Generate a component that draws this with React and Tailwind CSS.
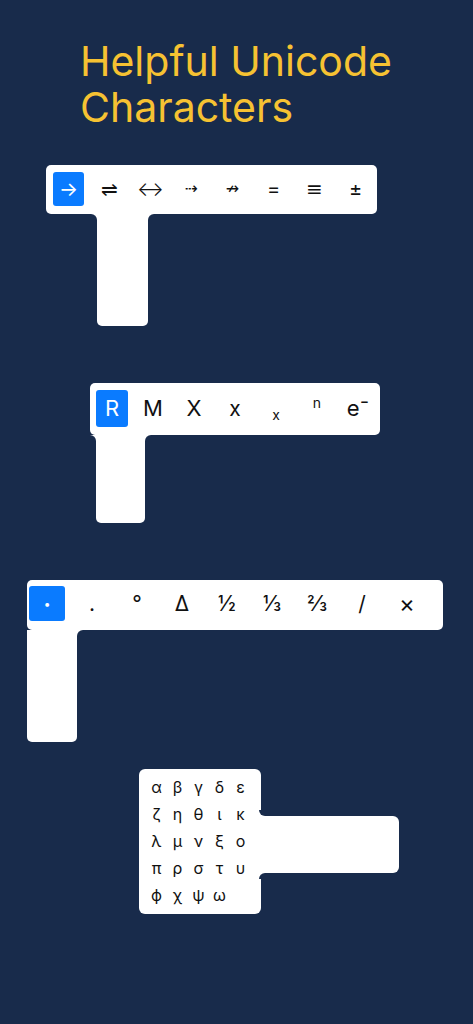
import React from 'react';

const FONT = { fontFamily: 'Inter, "DejaVu Sans", "Noto Sans", sans-serif' };

const ARROWS = ['→', '⇌', '↔', '⇢', '↛', '=', '≡', '±'];
const MARKS = ['•', '.', '°', 'Δ', '½', '⅓', '⅔', '/', '×'];
const GREEK = [
    'α', 'β', 'γ', 'δ', 'ε',
    'ζ', 'η', 'θ', 'ι', 'κ',
    'λ', 'μ', 'ν', 'ξ', 'ο',
    'π', 'ρ', 'σ', 'τ', 'υ',
    'ϕ', 'χ', 'ψ', 'ω',
];

// little inverted corners where the stem meets the bar
const Joint = ({ side }) => (
    <div className={`absolute top-0 w-[6px] h-[6px] bg-white ${side === 'left' ? '-left-[6px]' : '-right-[6px]'}`}>
        <div className={`w-full h-full bg-[#182b4b] ${side === 'left' ? 'rounded-tr-[6px]' : 'rounded-tl-[6px]'}`} />
    </div>
);

const Stem = ({ className }) => (
    <div className={`relative bg-white rounded-b-[5px] ${className}`}>
        <Joint side="left" />
        <Joint side="right" />
    </div>
);

const App = () => {
    return (
        <div className="min-h-screen w-full bg-[#182b4b] pb-10" style={FONT}>
            <h1 className="pl-[80px] pt-[38px] text-[41px] leading-[46px] text-[#f6c232] font-normal">
                Helpful Unicode<br />Characters
            </h1>

            {/* arrows */}
            <div className="mt-[35px] ml-[46px] flex flex-col items-start">
                <div className="w-[331px] h-[49px] bg-white rounded-[5px] flex items-start pt-[7px] pl-[7px] gap-[10px] text-[20px] text-[#111]">
                    {ARROWS.map((c, i) => (
                        <div
                            key={i}
                            className={`w-[31px] h-[34px] flex items-center justify-center rounded-[3px] ${i === 0 ? 'bg-[#0a7bff] text-white' : ''} ${i === 1 || i === 2 ? 'font-light' : ''} ${i === 3 || i === 4 ? 'font-["DejaVu_Sans"] text-[16px]' : ''}`}
                        >
                            {c}
                        </div>
                    ))}
                </div>
                <Stem className="ml-[51px] w-[51px] h-[112px]" />
            </div>

            {/* letters */}
            <div className="mt-[57px] ml-[90px] flex flex-col items-start">
                <div className="w-[290px] h-[52px] bg-white rounded-[5px] flex items-start pt-[7px] pl-[6px] gap-[9px] text-[22px] text-[#111]">
                    <div className="w-[32px] h-[37px] flex items-center justify-center rounded-[3px] bg-[#0a7bff] text-white">R</div>
                    <div className="w-[32px] h-[37px] flex items-center justify-center">M</div>
                    <div className="w-[32px] h-[37px] flex items-center justify-center">X</div>
                    <div className="w-[32px] h-[37px] flex items-center justify-center text-[21px]">x</div>
                    <div className="w-[32px] h-[37px] flex items-center justify-center text-[14px] pt-[12px]">x</div>
                    <div className="w-[32px] h-[37px] flex items-center justify-center text-[14px] pb-[12px]">n</div>
                    <div className="w-[32px] h-[37px] flex items-center justify-center">e⁻</div>
                </div>
                <Stem className="ml-[6px] w-[49px] h-[88px]" />
            </div>

            {/* marks */}
            <div className="mt-[57px] ml-[27px] flex flex-col items-start">
                <div className="w-[416px] h-[50px] bg-white rounded-[5px] flex items-start pt-[6px] pl-[2px] gap-[9px] text-[21px] text-[#111]">
                    {MARKS.map((c, i) => (
                        <div
                            key={i}
                            className={`w-[36px] h-[35px] flex items-center justify-center rounded-[3px] ${i === 0 ? 'bg-[#0a7bff] text-white text-[12px]' : ''} ${i === 8 ? 'text-[24px]' : ''}`}
                        >
                            {c}
                        </div>
                    ))}
                </div>
                <div className="relative bg-white rounded-b-[5px] w-[50px] h-[112px]">
                    <Joint side="right" />
                </div>
            </div>

            {/* greek */}
            <div className="mt-[27px] ml-[139px] flex items-start">
                <div className="w-[122px] h-[145px] bg-white rounded-[6px] pt-[4px] pl-[7px] grid grid-cols-[repeat(5,21px)] auto-rows-[27px] text-[16px] text-[#111]">
                    {GREEK.map((c) => (
                        <div key={c} className="flex items-center justify-center">{c}</div>
                    ))}
                </div>
                <div className="relative -ml-[2px] mt-[47px] w-[140px] h-[57px] bg-white rounded-r-[6px]">
                    <div className="absolute -top-[6px] left-0 w-[6px] h-[6px] bg-white">
                        <div className="w-full h-full bg-[#182b4b] rounded-bl-[6px]" />
                    </div>
                    <div className="absolute -bottom-[6px] left-0 w-[6px] h-[6px] bg-white">
                        <div className="w-full h-full bg-[#182b4b] rounded-tl-[6px]" />
                    </div>
                </div>
            </div>
        </div>
    );
};

export default App;
